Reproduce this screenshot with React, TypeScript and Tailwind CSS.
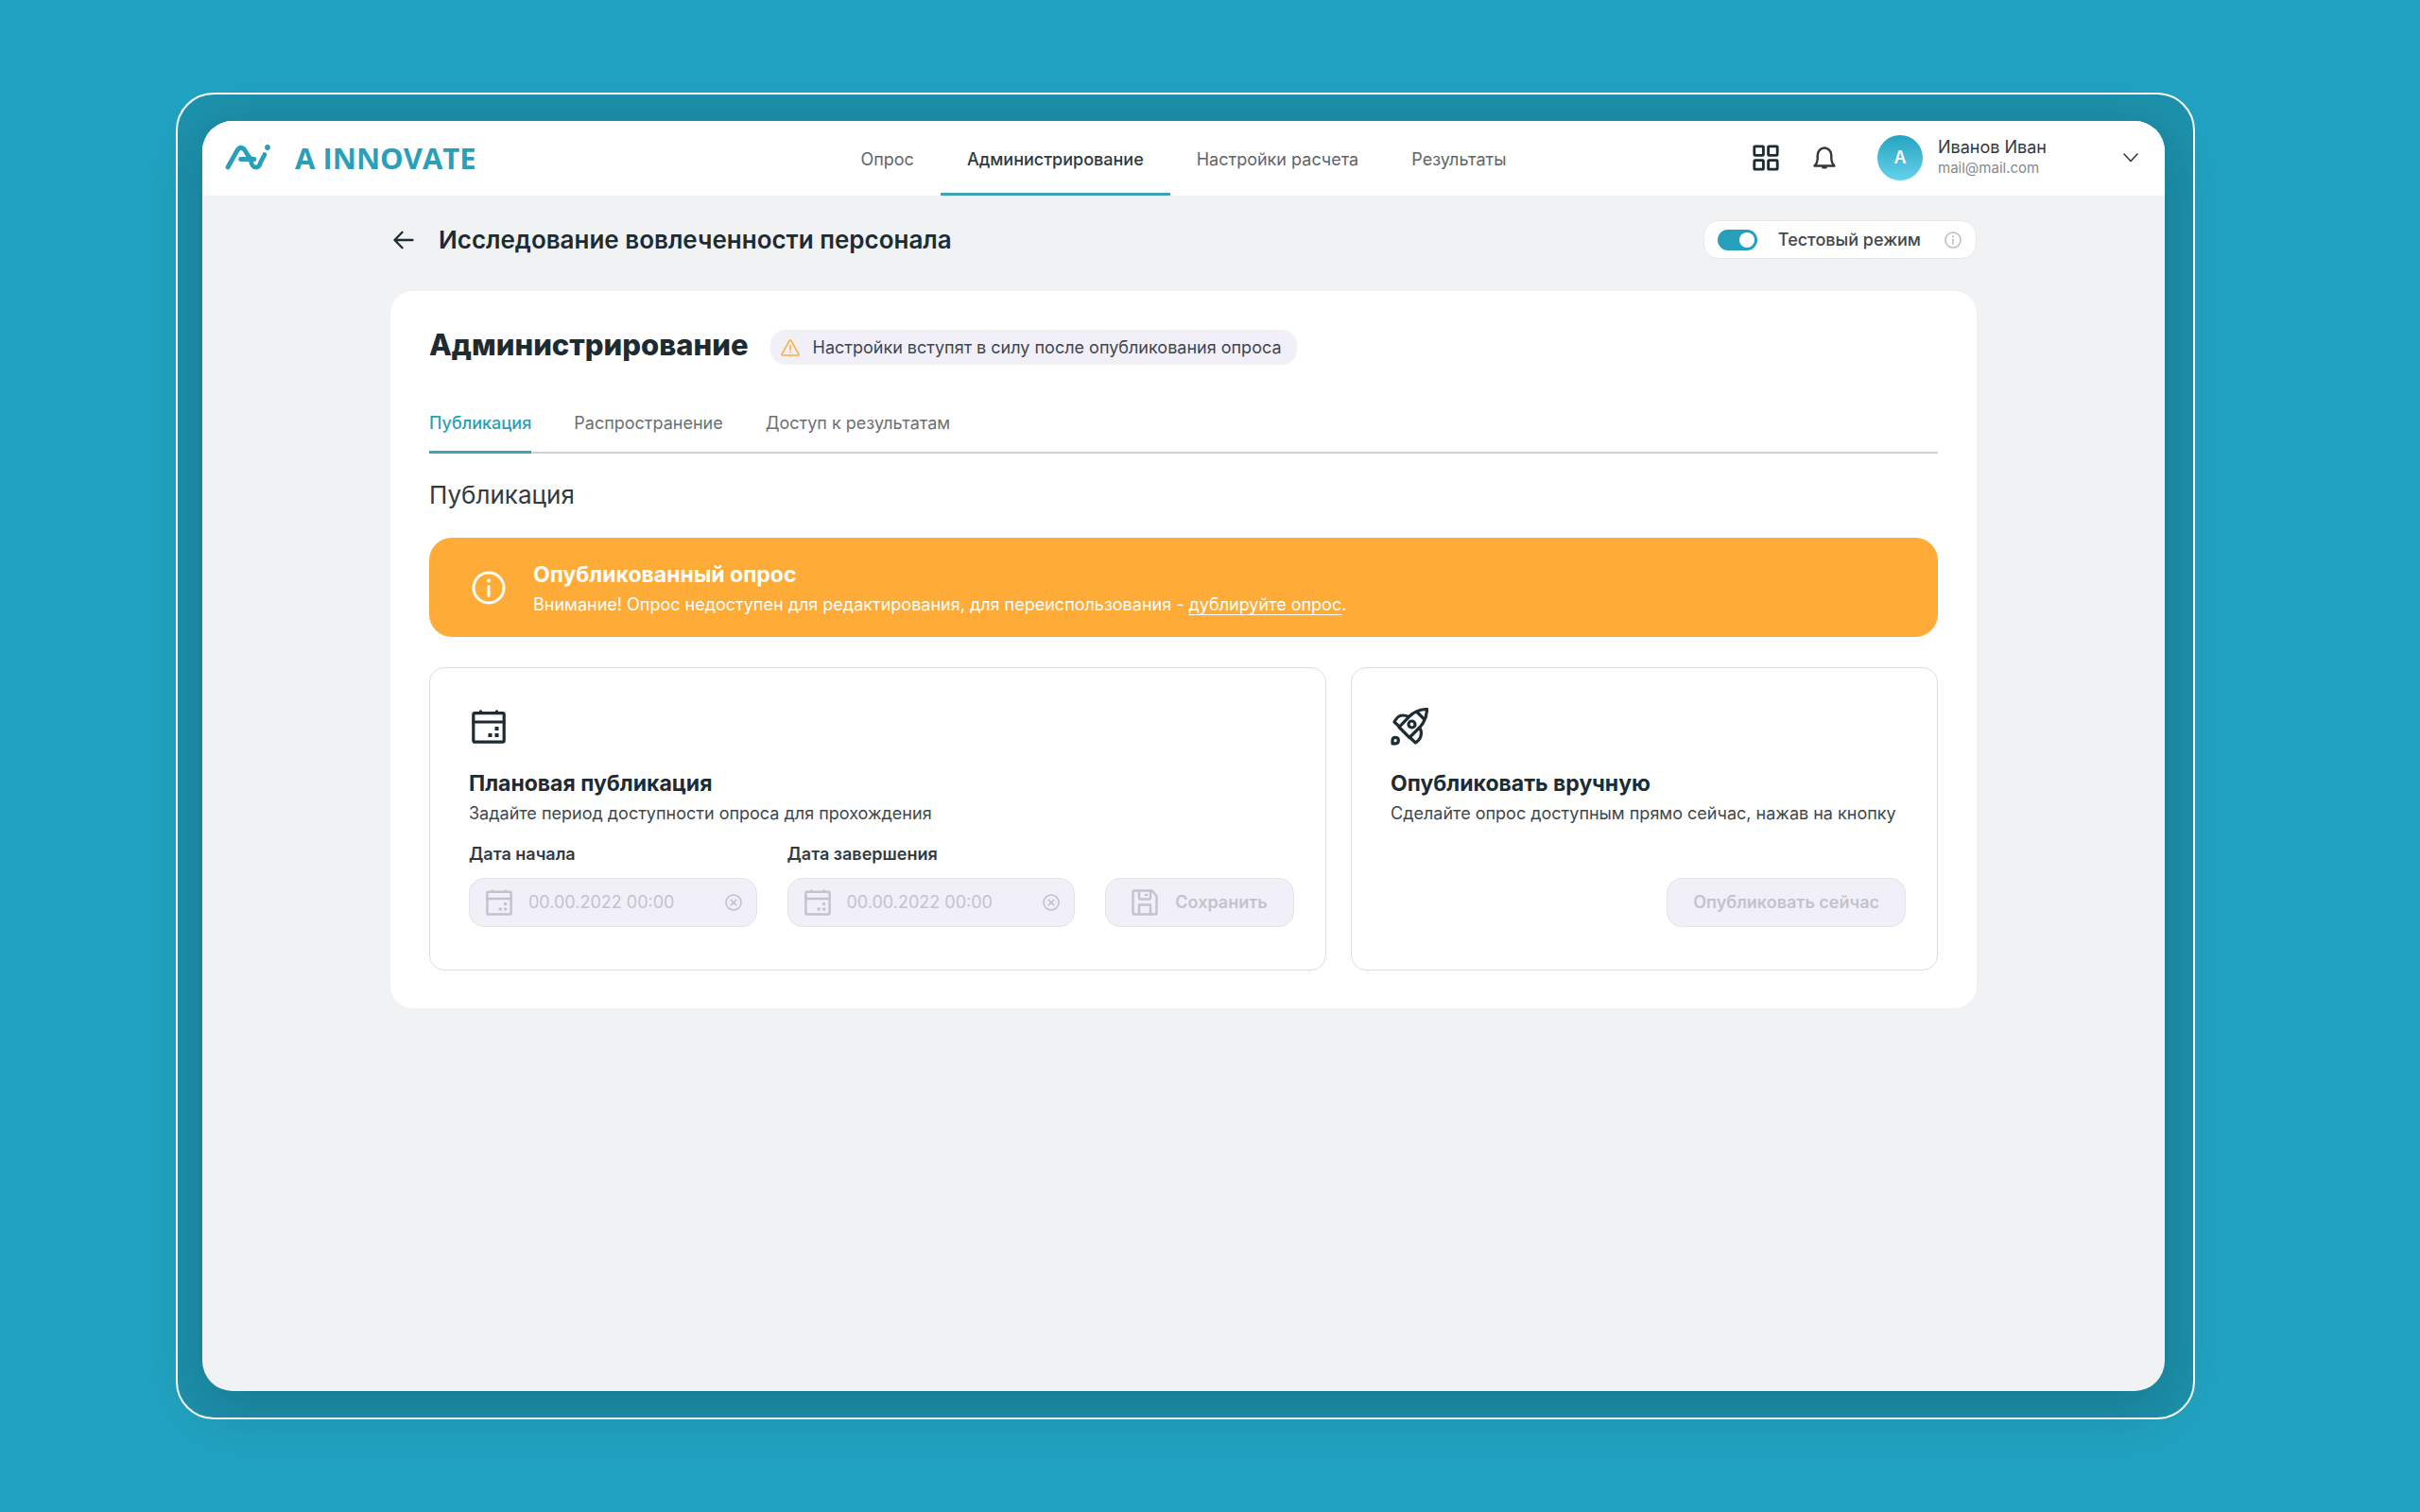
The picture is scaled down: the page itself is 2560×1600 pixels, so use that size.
import React from "react";

type IconProps = { className?: string };

function LogoMark() {
  return (
    <svg viewBox="0 0 48 27" className="h-[27px] w-12 shrink-0" fill="none" stroke="currentColor" strokeWidth="4.800" strokeLinecap="round" strokeLinejoin="round" aria-hidden="true">
      <path d="M3 24 12.500 7Q16.500 0 21 6L25 12.500Q27 15.500 31 15.500H16.500" />
      <path d="M27.500 17.500Q28.500 24 32.500 24T37.500 19L42 10.500" />
      <circle cx="45" cy="3" r="2.900" fill="currentColor" stroke="none" />
    </svg>
  );
}

function GridIcon() {
  return (
    <svg viewBox="0 0 28 28" className="size-7" fill="none" stroke="currentColor" strokeWidth="2.800" strokeLinejoin="round" aria-hidden="true">
      <rect x="1.800" y="1.800" width="9.600" height="9.600" rx="0.800" />
      <rect x="16.600" y="1.800" width="9.600" height="9.600" rx="0.800" />
      <rect x="1.800" y="16.600" width="9.600" height="9.600" rx="0.800" />
      <rect x="16.600" y="16.600" width="9.600" height="9.600" rx="0.800" />
    </svg>
  );
}

function BellIcon() {
  return (
    <svg viewBox="0 0 24 24" className="size-6" fill="none" stroke="currentColor" strokeWidth="2.400" strokeLinejoin="round" strokeLinecap="round" aria-hidden="true">
      <path d="M1.500 20.500H22.500Q19.500 17.500 19.300 13.500V9.500A7.300 8 0 0 0 4.700 9.500V13.500Q4.500 17.500 1.500 20.500Z" />
      <path d="M9.500 21.200Q12 24.800 14.500 21.200Z" fill="currentColor" stroke="none" />
      <path d="M10.500 22.200H13.500" />
    </svg>
  );
}

function ChevronIcon() {
  return (
    <svg viewBox="0 0 16 10" className="h-[10px] w-4" fill="none" stroke="currentColor" strokeWidth="1.600" strokeLinecap="round" strokeLinejoin="round" aria-hidden="true">
      <path d="M1 1 8 8.500 15 1" />
    </svg>
  );
}

function ArrowIcon() {
  return (
    <svg viewBox="0 0 22 20" className="h-5 w-[22px]" fill="none" stroke="currentColor" strokeWidth="2.300" strokeLinecap="round" strokeLinejoin="round" aria-hidden="true">
      <path d="M9.500 1.800 1.500 10 9.500 18.200M1.500 10H20.500" />
    </svg>
  );
}

function InfoIcon({ className }: IconProps) {
  return (
    <svg viewBox="0 0 36 36" className={className} fill="none" stroke="currentColor" strokeWidth="3" strokeLinecap="round" aria-hidden="true">
      <circle cx="18" cy="18" r="16" />
      <path d="M18 16.500V26.500" />
      <circle cx="18" cy="10.500" r="1.900" fill="currentColor" stroke="none" />
    </svg>
  );
}

function WarningIcon() {
  return (
    <svg viewBox="0 0 20 18" className="h-[18px] w-5 shrink-0 text-[#ffab38]" fill="none" stroke="currentColor" strokeWidth="1.600" strokeLinecap="round" strokeLinejoin="round" aria-hidden="true">
      <path d="M10 1Q10.600 1 11 1.700L18.800 15.400Q19.500 17 17.800 17H2.200Q.500 17 1.200 15.400L9 1.700Q9.400 1 10 1Z" />
      <path d="M10 6.500V11.200M10 13.800V14" />
    </svg>
  );
}

function CalendarIcon({ className }: IconProps) {
  return (
    <svg viewBox="0 0 36 36" className={className} fill="none" stroke="currentColor" strokeWidth="3.200" strokeLinecap="round" strokeLinejoin="round" aria-hidden="true">
      <rect x="1.800" y="3.600" width="32.400" height="30.600" rx="1.400" />
      <path d="M2 13H34M9.500 1.800V3M26.500 1.800V3" />
      <path fill="currentColor" stroke="none" d="M24.500 18H28.500V22H24.500ZM24.500 25H28.500V29H24.500ZM17.500 25H21.500V29H17.500Z" />
    </svg>
  );
}

function SaveIcon() {
  return (
    <svg viewBox="0 0 28 28" className="size-7 shrink-0" fill="none" stroke="currentColor" strokeWidth="2.400" strokeLinejoin="round" aria-hidden="true">
      <path d="M1.500 3Q1.500 1.500 3 1.500H21.500L26.500 7V25Q26.500 26.500 25 26.500H3Q1.500 26.500 1.500 25Z" />
      <path d="M8 1.500V8.500Q8 10.500 10 10.500H18Q20 10.500 20 8.500V1.500M8 26.500V16.500H20V26.500" />
      <path d="M15.500 5V7" strokeWidth="3" />
    </svg>
  );
}

function RocketIcon() {
  return (
    <svg viewBox="0 0 40 40" className="size-10" fill="none" stroke="currentColor" strokeWidth="3.200" strokeLinecap="round" strokeLinejoin="round" aria-hidden="true">
      <path d="M38.500 1.500Q27 2 20 9L9 20.500 20 31.500 31 20.500Q38 13 38.500 1.500Z" />
      <path d="M28 4.500 35.500 12" />
      <circle cx="22.500" cy="17.500" r="3.500" />
      <path d="M9.500 20 4 15Q7 9 11 8.200T19 9.500M20.500 31.500 26.500 37Q31.500 33.500 32.200 29T31 21.500" />
      <path d="M2 37.800V34.200A3.200 3.200 0 1 1 5.400 37.800Z" />
    </svg>
  );
}

function ClearIcon() {
  return (
    <svg viewBox="0 0 18 18" className="size-[18px]" fill="none" stroke="currentColor" strokeWidth="1.600" strokeLinecap="round" aria-hidden="true">
      <circle cx="9" cy="9" r="8" />
      <path d="M6.200 6.200 11.800 11.800M11.800 6.200 6.200 11.800" />
    </svg>
  );
}

const navLinks = [
  { label: "Опрос", active: false },
  { label: "Администрирование", active: true },
  { label: "Настройки расчета", active: false },
  { label: "Результаты", active: false },
];

const tabs = [
  { label: "Публикация", active: true },
  { label: "Распространение", active: false },
  { label: "Доступ к результатам", active: false },
];

function Header() {
  return (
    <header className="grid h-[79px] shrink-0 grid-cols-[1fr_auto_1fr] bg-white">
      <a href="#" className="flex items-center gap-[26px] pb-[2px] pl-6 text-[#2a9fb9]">
        <LogoMark />
        <span className="font-['Open_Sans',sans-serif] text-[31px] font-bold leading-10">A INNOVATE</span>
      </a>
      <nav className="flex">
        {navLinks.map((link) => (
          <a
            key={link.label}
            href="#"
            className={
              link.active
                ? "flex items-center border-b-[3px] border-[#3fa3b8] px-7 pt-[6px] text-lg font-medium text-[#2c3a40]"
                : "flex items-center px-7 pt-[3px] text-lg text-[#5f6568]"
            }
          >
            {link.label}
          </a>
        ))}
      </nav>
      <div className="flex items-center justify-end pr-7 pb-px">
        <button type="button" aria-label="Приложения" className="text-[#1d2b33]">
          <GridIcon />
        </button>
        <button type="button" aria-label="Уведомления" className="ml-9 text-[#33393d]">
          <BellIcon />
        </button>
        <div className="ml-11 flex size-12 items-center justify-center rounded-full bg-linear-to-b from-[#23a3c2] to-[#62d3ea] text-lg font-semibold text-white">
          A
        </div>
        <div className="ml-4 w-[196px]">
          <div className="text-lg leading-[22px] text-[#33393d]">Иванов Иван</div>
          <div className="text-[15px] leading-[22px] text-[#85898d]">mail@mail.com</div>
        </div>
        <button type="button" aria-label="Меню пользователя" className="text-[#33393d]">
          <ChevronIcon />
        </button>
      </div>
    </header>
  );
}

function DateField({ id, label }: { id: string; label: string }) {
  return (
    <div className="flex min-w-0 flex-1 flex-col">
      <label htmlFor={id} className="text-lg leading-7 font-semibold text-[#2f3b41]">
        {label}
      </label>
      <div className="mt-[11px] flex h-[52px] items-center rounded-2xl border border-[#e3e3e9] bg-[#f1f0f8] pr-[15px] pl-[17px] text-[#c3c3cd]">
        <CalendarIcon className="size-7 shrink-0" />
        <input
          id={id}
          type="text"
          disabled
          defaultValue="00.00.2022 00:00"
          className="ml-[17px] min-w-0 flex-1 bg-transparent text-lg text-[#c3c3cd]"
        />
        <button type="button" disabled aria-label="Очистить">
          <ClearIcon />
        </button>
      </div>
    </div>
  );
}

export default function App() {
  return (
    <div className="flex min-h-screen bg-[#21a2c0] py-[98px] pr-[238px] pl-[186px] font-['Inter',sans-serif]">
      <div className="flex flex-1 rounded-[40px] border-2 border-white bg-black/10 bg-clip-padding py-7 pr-[30px] pl-[26px]">
        <div className="flex min-w-0 flex-1 flex-col overflow-hidden rounded-[32px] bg-[#f0f2f4] shadow-[0_16px_64px_rgba(0,0,0,0.18)]">
          <Header />
          <main className="mx-auto w-full max-w-[1678px] flex-1">
            <div className="mt-[26px] flex h-[41px] items-center justify-between">
              <div className="flex items-center gap-[26px] pl-[3px] text-[#1d2b33]">
                <button type="button" aria-label="Назад">
                  <ArrowIcon />
                </button>
                <h1 className="text-[26px] leading-8 font-semibold">Исследование вовлеченности персонала</h1>
              </div>
              <label className="flex h-full items-center rounded-2xl border border-[#e6e8ea] bg-white pr-[15px] pl-[14px]">
                <input
                  type="checkbox"
                  role="switch"
                  defaultChecked
                  className="flex h-[22px] w-[42px] appearance-none items-center rounded-full bg-[#c3c3cd] px-[3px] before:size-4 before:rounded-full before:bg-white checked:justify-end checked:bg-[#259fbc]"
                />
                <span className="ml-[22px] text-lg font-medium text-[#41474b]">Тестовый режим</span>
                <InfoIcon className="ml-[25px] size-[18px] text-[#b9bcbf]" />
              </label>
            </div>

            <section className="mt-[34px] rounded-3xl bg-white px-[41px] pt-[41px] pb-10">
              <div className="flex items-start gap-[23px]">
                <h2 className="text-[31px] leading-8 font-extrabold text-[#1d2b33]">Администрирование</h2>
                <div className="flex h-[37px] items-center gap-[14px] rounded-2xl bg-[#f1f0f8] pr-4 pl-[11px]">
                  <WarningIcon />
                  <span className="text-lg text-[#41454f]">Настройки вступят в силу после опубликования опроса</span>
                </div>
              </div>

              <div role="tablist" className="mt-12 flex gap-[45px] bg-[linear-gradient(#cfd2d4,#cfd2d4)] bg-[length:100%_2px] bg-bottom bg-no-repeat">
                {tabs.map((tab) => (
                  <button
                    key={tab.label}
                    type="button"
                    role="tab"
                    aria-selected={tab.active}
                    className={
                      tab.active
                        ? "border-b-[3px] border-[#3fa3b8] pb-[15px] text-lg leading-7 font-medium text-[#2a9fb9]"
                        : "border-b-[3px] border-transparent pb-[15px] text-lg leading-7 text-[#6b7073]"
                    }
                  >
                    {tab.label}
                  </button>
                ))}
              </div>

              <h3 className="mt-7 text-[26px] leading-8 text-[#33393d]">Публикация</h3>

              <div className="mt-[29px] flex h-[105px] items-center rounded-3xl bg-[#ffab38] px-[45px] text-white">
                <InfoIcon className="size-9 shrink-0" />
                <div className="ml-[29px]">
                  <div className="text-[23px] leading-9 font-bold">Опубликованный опрос</div>
                  <p className="text-lg leading-7">
                    Внимание! Опрос недоступен для редактирования, для переиспользования -{" "}
                    <a href="#" className="underline decoration-1 underline-offset-4">дублируйте опрос</a>.
                  </p>
                </div>
              </div>

              <div className="mt-8 grid grid-cols-[minmax(0,949fr)_minmax(0,621fr)] gap-[26px]">
                <article className="rounded-2xl border border-[#dcdfe2] pt-11 pr-[33px] pb-[45px] pl-[41px]">
                  <CalendarIcon className="ml-[3px] size-9 text-[#1d2b33]" />
                  <h4 className="mt-6 text-[23px] leading-9 font-bold text-[#1d2b33]">Плановая публикация</h4>
                  <p className="text-lg leading-7 text-[#41484c]">Задайте период доступности опроса для прохождения</p>
                  <div className="mt-[15px] flex items-end gap-8">
                    <DateField id="start" label="Дата начала" />
                    <DateField id="end" label="Дата завершения" />
                    <button
                      type="button"
                      disabled
                      className="flex h-[52px] w-[200px] items-center justify-center gap-[18px] rounded-2xl border border-[#e3e3e9] bg-[#f1f0f8] text-lg font-semibold text-[#c3c3cd]"
                    >
                      <SaveIcon />
                      Сохранить
                    </button>
                  </div>
                </article>

                <article className="flex flex-col rounded-2xl border border-[#dcdfe2] pt-[42px] pr-[33px] pb-[45px] pl-[41px]">
                  <div className="text-[#1d2b33]">
                    <RocketIcon />
                  </div>
                  <h4 className="mt-[22px] text-[23px] leading-9 font-bold text-[#1d2b33]">Опубликовать вручную</h4>
                  <p className="text-lg leading-7 text-[#41484c]">Сделайте опрос доступным прямо сейчас, нажав на кнопку</p>
                  <button
                    type="button"
                    disabled
                    className="mt-auto h-[52px] self-end rounded-2xl border border-[#e3e3e9] bg-[#f1f0f8] px-[27px] text-lg font-semibold text-[#c3c3cd]"
                  >
                    Опубликовать сейчас
                  </button>
                </article>
              </div>
            </section>
          </main>
        </div>
      </div>
    </div>
  );
}
